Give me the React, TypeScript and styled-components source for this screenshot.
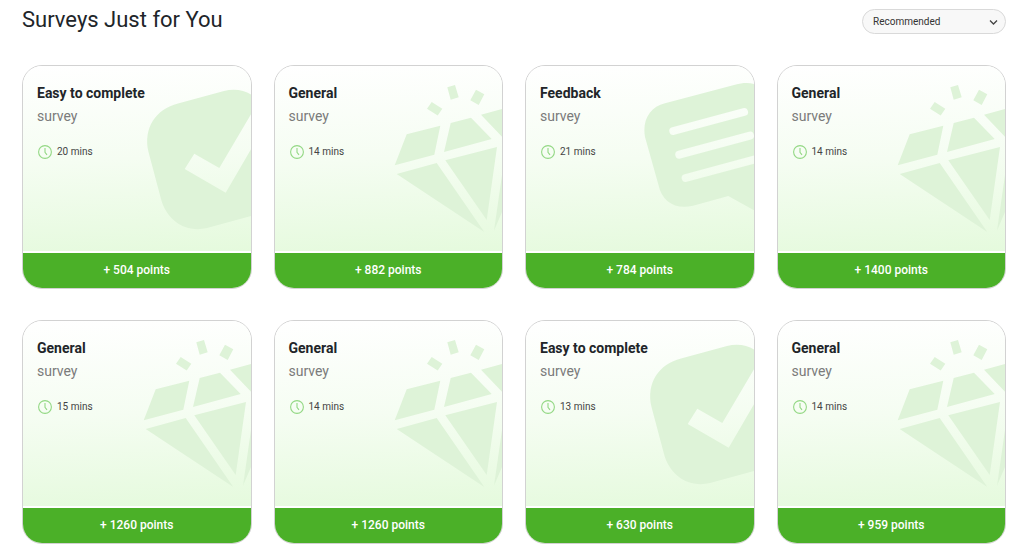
import React from "react";
import styled, { createGlobalStyle } from "styled-components";

const GlobalStyle = createGlobalStyle`
  *, *::before, *::after { box-sizing: border-box; }
  body {
    margin: 0;
    background: #fff;
    color: #212529;
    font-family: Roboto, "Liberation Sans", sans-serif;
  }
`;

const Page = styled.main`
  padding: 6px 18px 8px 22px;
`;

const Header = styled.header`
  display: flex;
  justify-content: space-between;
  align-items: flex-start;
  margin-bottom: 31px;
`;

const Heading = styled.h1`
  margin: 0;
  font-size: 22px;
  line-height: 28px;
  font-weight: 400;
`;

const SortField = styled.label`
  position: relative;
  display: block;
  width: 144px;
  margin-top: 3px;
`;

const SortSelect = styled.select`
  display: block;
  appearance: none;
  width: 100%;
  height: 25px;
  padding: 0 24px 1px 10px;
  border: 1px solid #d9d9d9;
  border-radius: 13px;
  background: #f8f8f8;
  color: #333;
  font: 400 10px Roboto, "Liberation Sans", sans-serif;
`;

const SortArrow = styled.svg`
  position: absolute;
  top: 10px;
  right: 8px;
  width: 9px;
  height: 7px;
  pointer-events: none;
`;

const Grid = styled.ul`
  display: grid;
  grid-template-columns: repeat(4, minmax(0, 1fr));
  gap: 31px 22px;
  margin: 0;
  padding: 0;
  list-style: none;
`;

const Card = styled.li`
  display: flex;
  flex-direction: column;
  gap: 2px;
  overflow: hidden;
  border: 1px solid #d2d2d2;
  border-radius: 20px;
  background: #fff;
`;

const CardBody = styled.div`
  position: relative;
  min-height: 185px;
  padding: 16px 14px;
  background: linear-gradient(177deg, #fff 0%, #f5fdf2 50%, #e5fadd 100%);
`;

const Title = styled.h2`
  position: relative;
  margin: 0;
  font-size: 14px;
  line-height: 22px;
  font-weight: 700;
`;

const Kind = styled.p`
  position: relative;
  margin: 0 0 15px;
  color: #7b7b7b;
  font-size: 14px;
  line-height: 24px;
`;

const Duration = styled.div`
  position: relative;
  display: flex;
  align-items: center;
  gap: 5px;
  padding-left: 1px;
  color: #444;
  font-size: 10px;
  line-height: 18px;
`;

const Points = styled.button`
  height: 35px;
  padding: 0 0 2px;
  border: 0;
  background: #4bb028;
  color: #fff;
  font: 500 12px Roboto, "Liberation Sans", sans-serif;
  cursor: pointer;
`;

const Art = styled.svg`
  position: absolute;
  top: 0;
  right: 0;
  width: 110px;
  height: 185px;
  fill: #def3d8;
`;

type Theme = "easy" | "general" | "feedback";

interface Survey {
  theme: Theme;
  minutes: number;
  points: number;
}

const titles: Record<Theme, string> = {
  easy: "Easy to complete",
  general: "General",
  feedback: "Feedback",
};

const surveys: Survey[] = [
  { theme: "easy", minutes: 20, points: 504 },
  { theme: "general", minutes: 14, points: 882 },
  { theme: "feedback", minutes: 21, points: 784 },
  { theme: "general", minutes: 14, points: 1400 },
  { theme: "general", minutes: 15, points: 1260 },
  { theme: "general", minutes: 14, points: 1260 },
  { theme: "easy", minutes: 13, points: 630 },
  { theme: "general", minutes: 14, points: 959 },
];

function CheckArt() {
  return (
    <Art viewBox="0 0 110 185" aria-hidden="true">
      <path
        fillRule="evenodd"
        d="M110 28.5C103 24 93 22.500 83 25L37 37.500C15 43 2 62 7.500 86L20 133C26 155 45 167 66 162L110 150V83.300L84.700 126.700L43.700 103L53.300 87.700L78.300 102L110 48.300Z"
      />
    </Art>
  );
}

function DiamondArt() {
  return (
    <Art viewBox="0 0 110 185" aria-hidden="true">
      <path d="M35 42.700L39.700 36L50.300 42.700L45.700 49.500ZM55.300 21.300L63 19L66.700 31.300L58.700 33.700ZM84 23.700L92.300 28.300L86.700 39L78.300 34.300Z" />
      <path d="M14.700 68.300L48.300 59.700L42.300 88.700L2.700 99.300ZM58.700 57L79 51.700L99.700 73L52 86ZM89 48.700L110 43V70.700Z" />
      <path d="M4.700 108L44.700 97L92.300 166ZM53.300 94.300L105 81L94.700 154ZM110 109V146L102 164.700Z" />
    </Art>
  );
}

function MessageArt() {
  return (
    <Art viewBox="0 0 110 185" aria-hidden="true">
      <mask id="message-lines" maskUnits="userSpaceOnUse" x="0" y="0" width="110" height="185">
        <rect width="110" height="185" fill="#fff" />
        <path
          d="M29.300 65L100 46M35.300 88.700L106 69.700M41.700 112L112 93"
          stroke="#000"
          strokeWidth="8"
          strokeLinecap="round"
        />
      </mask>
      <path
        mask="url(#message-lines)"
        d="M110 18C104 16.500 98 17 91 18.700L21 37.300C6 41 -2 54 1 71L14.500 119C18 136 32 144 49 139.700L84.300 130L110 144.300Z"
      />
    </Art>
  );
}

const artwork: Record<Theme, React.ComponentType> = {
  easy: CheckArt,
  general: DiamondArt,
  feedback: MessageArt,
};

function ClockIcon() {
  return (
    <svg width="14" height="14" viewBox="0 0 14 14" fill="none" stroke="#93d884" aria-hidden="true">
      <circle cx="7" cy="7" r="6.400" strokeWidth="1.100" />
      <path d="M7 3V7.300L9 9.800" strokeWidth="1.100" />
    </svg>
  );
}

function SurveyCard({ theme, minutes, points }: Survey) {
  const Artwork = artwork[theme];
  return (
    <Card>
      <CardBody>
        <Artwork />
        <Title>{titles[theme]}</Title>
        <Kind>survey</Kind>
        <Duration>
          <ClockIcon />
          <span>{minutes} mins</span>
        </Duration>
      </CardBody>
      <Points type="button">+ {points} points</Points>
    </Card>
  );
}

export default function App() {
  return (
    <>
      <GlobalStyle />
      <Page>
        <Header>
          <Heading>Surveys Just for You</Heading>
          <SortField>
            <SortSelect aria-label="Sort surveys" defaultValue="recommended">
              <option value="recommended">Recommended</option>
            </SortSelect>
            <SortArrow viewBox="0 0 9 7" fill="none" stroke="#444" strokeWidth="1.300" aria-hidden="true">
              <path d="M1 1.500L4.500 5L8 1.500" />
            </SortArrow>
          </SortField>
        </Header>
        <Grid>
          {surveys.map((survey, index) => (
            <SurveyCard key={index} {...survey} />
          ))}
        </Grid>
      </Page>
    </>
  );
}
